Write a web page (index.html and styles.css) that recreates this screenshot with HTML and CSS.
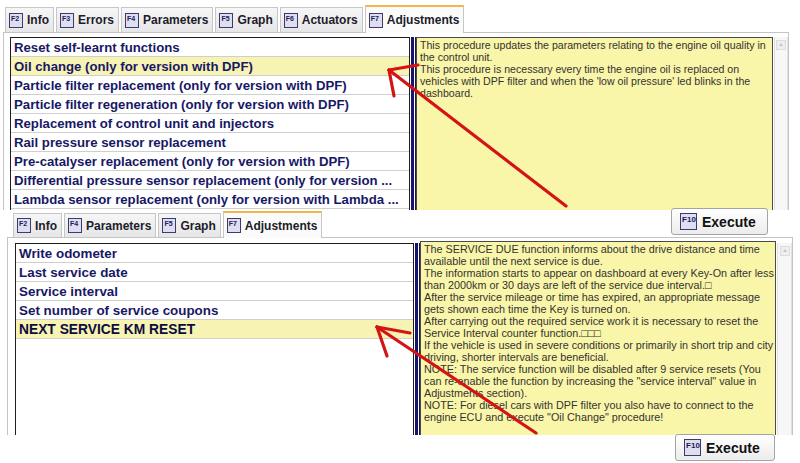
FILE: index.html
```html
<!DOCTYPE html>
<html>
<head>
    <title>Adjustments</title>
    <link rel="stylesheet" href="styles.css">
</head>
<body>
    <div class="screen">
        <div class="tabs tabs-top">
            <div class="tab"><span class="fkey">F2</span>Info</div>
            <div class="tab"><span class="fkey">F3</span>Errors</div>
            <div class="tab"><span class="fkey">F4</span>Parameters</div>
            <div class="tab"><span class="fkey">F5</span>Graph</div>
            <div class="tab"><span class="fkey">F6</span>Actuators</div>
            <div class="tab active"><span class="fkey">F7</span>Adjustments</div>
        </div>
        <div class="panel panel-top">
            <ul class="proc-list">
                <li>Reset self-learnt functions</li>
                <li class="selected">Oil change (only for version with DPF)</li>
                <li>Particle filter replacement (only for version with DPF)</li>
                <li>Particle filter regeneration (only for version with DPF)</li>
                <li>Replacement of control unit and injectors</li>
                <li>Rail pressure sensor replacement</li>
                <li>Pre-catalyser replacement (only for version with DPF)</li>
                <li>Differential pressure sensor replacement (only for version ...</li>
                <li>Lambda sensor replacement (only for version with Lambda ...</li>
            </ul>
            <div class="sep"></div>
            <div class="info">
                This procedure updates the parameters relating to the engine oil quality in the control unit.<br>
                This procedure is necessary every time the engine oil is replaced on vehicles with DPF filter and when the 'low oil pressure' led blinks in the dashboard.
            </div>
            <div class="scroll"><span class="up"></span></div>
        </div>

        <div class="midrow">
            <div class="tabs tabs-bottom">
                <div class="tab"><span class="fkey">F2</span>Info</div>
                <div class="tab"><span class="fkey">F4</span>Parameters</div>
                <div class="tab"><span class="fkey">F5</span>Graph</div>
                <div class="tab active"><span class="fkey">F7</span>Adjustments</div>
            </div>
            <button class="exec exec-top"><span class="fkey big">F10</span>Execute</button>
        </div>

        <div class="panel panel-bottom">
            <ul class="proc-list">
                <li>Write odometer</li>
                <li>Last service date</li>
                <li>Service interval</li>
                <li>Set number of service coupons</li>
                <li class="selected strong">NEXT SERVICE KM RESET</li>
            </ul>
            <div class="sep"></div>
            <div class="info">
                The SERVICE DUE function informs about the drive distance and time available until the next service is due.<br>
                The information starts to appear on dashboard at every Key-On after less than 2000km or 30 days are left of the service due interval.&#9633;<br>
                After the service mileage or time has expired, an appropriate message gets shown each time the Key is turned on.<br>
                After carrying out the required service work it is necessary to reset the Service Interval counter function.&#9633;&#9633;&#9633;<br>
                If the vehicle is used in severe conditions or primarily in short trip and city driving, shorter intervals are beneficial.<br>
                NOTE: The service function will be disabled after 9 service resets (You can re-enable the function by increasing the "service interval" value in Adjustments section).<br>
                NOTE: For diesel cars with DPF filter you also have to connect to the engine ECU and execute "Oil Change" procedure!
            </div>
            <div class="scroll"><span class="up"></span></div>
        </div>

        <div class="footrow">
            <button class="exec exec-bottom"><span class="fkey big">F10</span>Execute</button>
        </div>

        <!-- red pointer arrows drawn over the screenshot -->
        <svg class="arrows" width="800" height="463" viewBox="0 0 800 463">
            <g stroke="#d41414" stroke-width="3.2" stroke-linecap="round" fill="none">
                <path d="M566 206 L389 70"/>
                <path d="M389 70 L418 65"/>
                <path d="M389 70 L394 96"/>
                <path d="M536 433 L377 327"/>
                <path d="M377 327 L410 333"/>
                <path d="M377 327 L387 356"/>
            </g>
        </svg>
    </div>
</body>
</html>
```

FILE: styles.css
```css
body {
    margin: 0;
    background-color: #ffffff;
    font-family: "Liberation Sans", Arial, sans-serif;
}

.screen {
    position: relative;
    width: 800px;
    height: 463px;
    overflow: hidden;
}

/* tabs */

.tabs {
    display: flex;
    align-items: flex-end;
    gap: 2px;
}

.tabs-top {
    height: 26px;
    padding-top: 6px;
    padding-left: 5px;
}

.tab {
    display: flex;
    align-items: center;
    height: 24px;
    padding: 0 4px 0 3px;
    background: linear-gradient(#f6f6f6, #e6e6e6);
    border: 1px solid #c6c6c6;
    border-bottom: none;
    font-size: 12px;
    font-weight: bold;
    color: #1c1c2c;
}

.tab.active {
    position: relative;
    height: 26px;
    margin-bottom: -1px;
    background: #fbfbfb;
    border-top: 2px solid #f2b64c;
    z-index: 1;
}

.fkey {
    display: inline-block;
    width: 14px;
    height: 15px;
    margin-right: 4px;
    border: 1px solid #3c3c6c;
    background-color: #dedef0;
    font-size: 7px;
    line-height: 9px;
    font-weight: bold;
    color: #20205a;
    text-indent: 1px;
    box-sizing: border-box;
}

.fkey.big {
    width: 17px;
    height: 17px;
    margin-right: 5px;
    line-height: 11px;
    font-size: 8px;
    text-indent: 1px;
}

/* panels */

.panel {
    display: flex;
    align-items: flex-start;
    border: 1px solid #c4c4c4;
    border-bottom: none;
    box-sizing: border-box;
    overflow: hidden;
}

.panel-top {
    margin-left: 3px;
    width: 786px;
    height: 178px;
    padding: 4px 0 0 6px;
}

.panel-bottom {
    margin-left: 7px;
    width: 786px;
    height: 198px;
    padding: 5px 0 0 7px;
}

.proc-list {
    list-style-type: none;
    margin: 0;
    padding: 0;
    height: 200px;
    border: 1px solid #1e1e1e;
    border-bottom: none;
    background-color: #ffffff;
    box-sizing: border-box;
}

.panel-top .proc-list {
    width: 400px;
}

.panel-bottom .proc-list {
    width: 399px;
}

.proc-list li {
    height: 18px;
    line-height: 19px;
    padding-left: 3px;
    border-bottom: 1px solid #cfcfcf;
    font-size: 13.2px;
    font-weight: bold;
    color: #181866;
    white-space: nowrap;
    overflow: hidden;
}

.panel-bottom .proc-list li {
    padding-left: 3px;
    font-size: 13.4px;
}

.proc-list li.selected {
    background-color: #f7f3b2;
}

.proc-list li.strong {
    color: #0c0c40;
    font-size: 13.8px;
}

.sep {
    width: 1px;
    height: 200px;
    margin-left: 1px;
    border-left: 3px solid #16166a;
    border-right: 1px solid #16166a;
    background-color: #ffffff;
}

.info {
    height: 200px;
    padding: 1px 3px;
    background-color: #f9f5a9;
    border: 1px solid #4a4a4a;
    box-sizing: border-box;
    font-size: 10.6px;
    line-height: 12px;
    color: #333333;
}

.panel-top .info {
    width: 357px;
}

.panel-bottom .info {
    width: 356px;
    margin-top: -2px;
    padding: 1px 0 1px 3px;
    font-size: 10.8px;
}

.scroll {
    width: 12px;
    height: 200px;
    margin-left: 1px;
    background-color: #f7f7f7;
    border-left: 1px solid #e2e2e2;
    border-right: 1px solid #e2e2e2;
}

.panel-bottom .scroll {
    width: 13px;
    margin-left: 1px;
}

.up {
    display: block;
    width: 10px;
    height: 10px;
    margin: 3px auto 0;
    background-color: #efefef;
    border: 1px solid #dcdcdc;
    box-sizing: border-box;
    position: relative;
}

.up::after {
    content: "";
    position: absolute;
    left: 2px;
    top: 2px;
    border-left: 2px solid transparent;
    border-right: 2px solid transparent;
    border-bottom: 3px solid #c4c4c4;
}

/* middle row with second tab strip and execute button */

.midrow {
    display: flex;
    justify-content: space-between;
    align-items: flex-start;
    height: 27px;
}

.tabs-bottom {
    height: 27px;
    padding-left: 13px;
}

.tabs-bottom .tab {
    height: 23px;
}

.tabs-bottom .tab.active {
    height: 25px;
}

.exec {
    display: flex;
    align-items: center;
    height: 27px;
    padding: 0 0 0 8px;
    background: linear-gradient(#ffffff, #ececec);
    border: 1px solid #a4a4a4;
    border-radius: 3px;
    font-family: "Liberation Sans", Arial, sans-serif;
    font-size: 14px;
    font-weight: bold;
    color: #111111;
    box-sizing: border-box;
    position: relative;
    z-index: 2;
}

.exec-top {
    width: 97px;
    margin-top: -2px;
    margin-right: 32px;
}

.footrow {
    display: flex;
    justify-content: flex-end;
    margin-top: -1px;
}

.exec-bottom {
    width: 100px;
    margin-right: 25px;
}

.arrows {
    position: absolute;
    left: 0;
    top: 0;
    pointer-events: none;
    z-index: 5;
}
```
